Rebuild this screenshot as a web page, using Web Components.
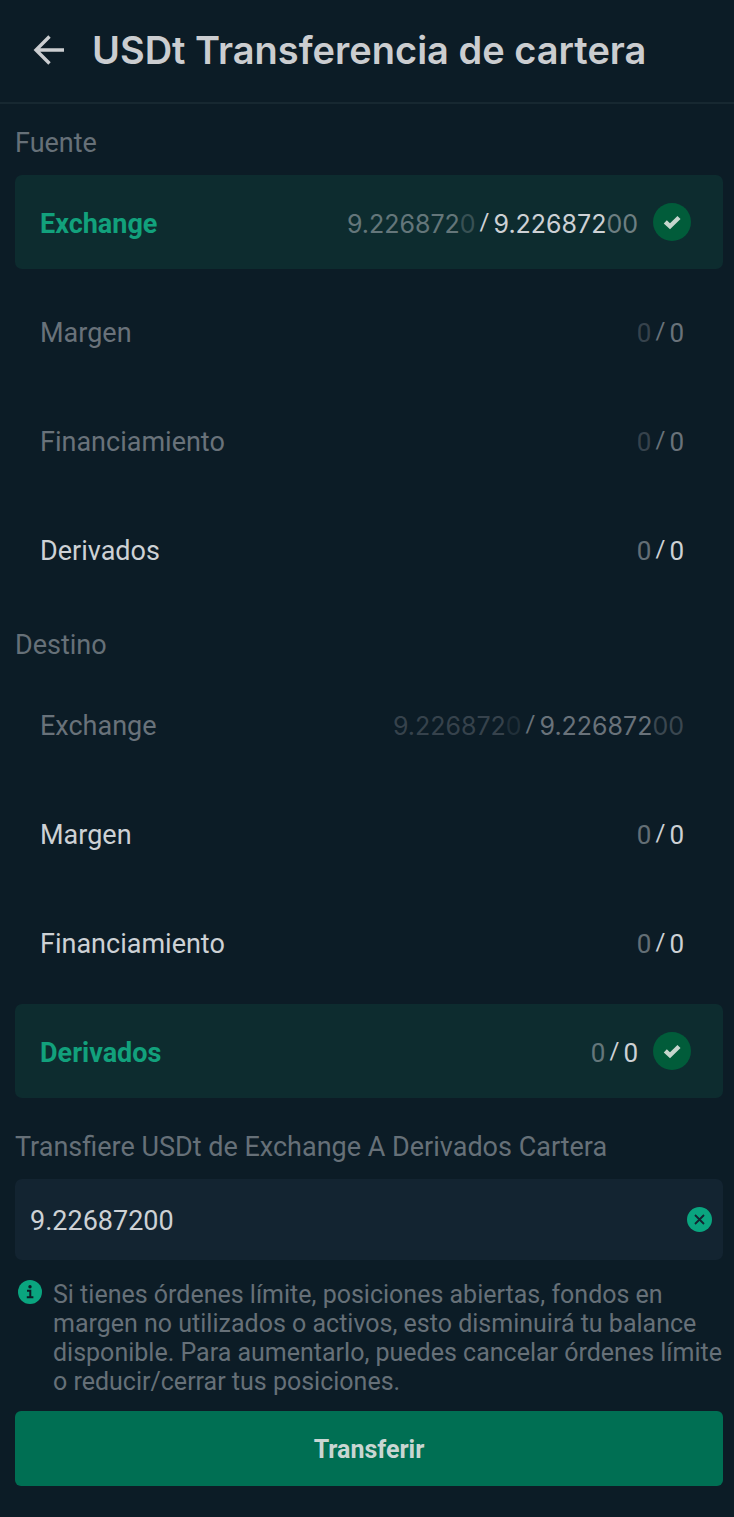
<!DOCTYPE html>
<html lang="es">
<head>
<meta charset="utf-8">
<meta name="viewport" content="width=device-width, initial-scale=1">
<title>USDt Transferencia de cartera</title>
<style>
  html { background: #0c1c26; }
  body { margin: 0; font-family: Roboto, "Liberation Sans", sans-serif; color: #cdd1d5; }
</style>
</head>
<body>
<transfer-app></transfer-app>

<script>
class PageHeader extends HTMLElement {
  connectedCallback() {
    this.attachShadow({ mode: 'open' }).innerHTML = `
      <style>
        :host { display: block; }
        header { display: flex; align-items: center; gap: 28px; height: 100px; padding: 0 32px 2px; border-bottom: 2px solid #172831; }
        button { flex: none; display: flex; padding: 0; border: 0; background: none; color: #cbcdd0; cursor: pointer; }
        h1 { margin: 0; font: 600 38px/48px Inter, sans-serif; color: #cbcdd0; }
      </style>
      <header>
        <button type="button" aria-label="Volver">
          <svg width="32" height="32" viewBox="0 0 32 32" fill="none" stroke="currentColor" stroke-width="3.400"><path d="M32 16H4M17.500 2.500 4 16l13.500 13.500"/></svg>
        </button>
        <h1><slot></slot></h1>
      </header>`;
  }
}
customElements.define('page-header', PageHeader);

/* available / total, with the trailing zeros of each figure dimmed */
class WalletBalance extends HTMLElement {
  static figure(value) {
    const [, head, zeros] = value.match(/^(.*?)(0*)$/);
    return head ? `${head}<i>${zeros}</i>` : value;
  }
  connectedCallback() {
    const available = this.getAttribute('available');
    const total = this.getAttribute('total');
    this.attachShadow({ mode: 'open' }).innerHTML = `
      <style>
        :host { display: flex; align-items: center; gap: 4px; font-size: 26px; line-height: 32px; }
        :host([decimal]) { font-family: Inter, sans-serif; font-size: 25px; }
        .available { opacity: .45; }
        i { font-style: normal; opacity: .5; }
        .slash { font: 24px/28px Roboto, sans-serif; padding-bottom: 4px; }
      </style>
      <span class="available">${WalletBalance.figure(available)}</span>
      <span class="slash">/</span>
      <span>${WalletBalance.figure(total)}</span>`;
  }
}
customElements.define('wallet-balance', WalletBalance);

class WalletPicker extends HTMLElement {
  connectedCallback() {
    const name = this.getAttribute('name');
    const selected = this.getAttribute('selected');
    const disabled = (this.getAttribute('disabled-wallets') || '').split(' ');
    const wallets = [
      ['Exchange', '9.2268720', '9.22687200'],
      ['Margen', '0', '0'],
      ['Financiamiento', '0', '0'],
      ['Derivados', '0', '0'],
    ];
    const rows = wallets.map(([label, available, total]) => `
      <label>
        <input type="radio" name="${name}" value="${label}" ${label === selected ? 'checked' : ''} ${disabled.includes(label) ? 'disabled' : ''}>
        <span class="name">${label}</span>
        <wallet-balance available="${available}" total="${total}" ${total.includes('.') ? 'decimal' : ''}></wallet-balance>
        <svg class="check" width="38" height="38" viewBox="0 0 38 38" aria-hidden="true"><circle cx="19" cy="19" r="19" fill="#015c3a"/><path d="M12.300 18.800l4.700 4.500 9-8.800" fill="none" stroke="#c6d6cd" stroke-width="4.400"/></svg>
      </label>`).join('');
    this.attachShadow({ mode: 'open' }).innerHTML = `
      <style>
        :host { display: block; }
        fieldset { margin: 0; padding: 0; border: 0; min-width: 0; }
        legend { padding: 0 0 16px; font-size: 27px; line-height: 32px; color: #667078; }
        .rows { display: grid; gap: 15px; }
        label { display: flex; align-items: center; height: 94px; box-sizing: border-box; padding: 0 39px 0 25px; border-radius: 7px; cursor: pointer; }
        .name, wallet-balance { padding-top: 3px; }
        .name { flex: 1; font-size: 27px; line-height: 32px; }
        input { appearance: none; margin: 0; width: 0; height: 0; }
        .check { display: none; }
        label:has(:disabled) { color: #69727a; cursor: default; }
        label:has(:checked) { background: #0d2c2f; padding-right: 32px; }
        :checked ~ .name { font-weight: 700; color: #12a17c; }
        :checked ~ .check { display: block; margin-left: 15px; }
      </style>
      <fieldset>
        <legend><slot></slot></legend>
        <div class="rows">${rows}</div>
      </fieldset>`;
  }
}
customElements.define('wallet-picker', WalletPicker);

class AmountField extends HTMLElement {
  connectedCallback() {
    this.attachShadow({ mode: 'open' }).innerHTML = `
      <style>
        :host { display: block; }
        label { display: block; padding-bottom: 16px; font-size: 27px; line-height: 32px; color: #667078; }
        .box { display: flex; align-items: center; height: 81px; padding: 0 11px 0 15px; border-radius: 7px; background: #132431; }
        input { flex: 1; min-width: 0; padding: 2px 0 0; border: 0; outline: 0; background: none; font: 27px/32px Roboto, sans-serif; color: #cdd1d5; }
        button { display: flex; padding: 0; border: 0; background: none; cursor: pointer; }
      </style>
      <label for="amount">${this.getAttribute('label')}</label>
      <div class="box">
        <input id="amount" type="text" inputmode="decimal" value="${this.getAttribute('value')}">
        <button type="button" aria-label="Borrar">
          <svg width="25" height="25" viewBox="0 0 25 25"><circle cx="12.500" cy="12.500" r="12.500" fill="#0aa57f"/><path d="M8 8l9 9M17 8l-9 9" stroke="#132431" stroke-width="1.800"/></svg>
        </button>
      </div>`;
    const root = this.shadowRoot;
    root.querySelector('button').onclick = () => { root.querySelector('input').value = ''; };
  }
}
customElements.define('amount-field', AmountField);

class InfoNote extends HTMLElement {
  connectedCallback() {
    this.attachShadow({ mode: 'open' }).innerHTML = `
      <style>
        :host { display: flex; align-items: flex-start; gap: 11px; padding-left: 3px; }
        svg { flex: none; }
        p { margin: 0; font-size: 25px; line-height: 29px; color: #667078; }
      </style>
      <svg width="24" height="24" viewBox="0 0 24 24" aria-hidden="true"><circle cx="12" cy="12" r="12" fill="#0aa57f"/><circle cx="12" cy="6.800" r="1.700" fill="#0c1c26"/><path d="M9 10.800h3.300v6.200M8.800 17.200h6.600" fill="none" stroke="#0c1c26" stroke-width="2"/></svg>
      <p><slot></slot></p>`;
  }
}
customElements.define('info-note', InfoNote);

class SubmitButton extends HTMLElement {
  connectedCallback() {
    this.attachShadow({ mode: 'open' }).innerHTML = `
      <style>
        :host { display: block; }
        button { display: block; width: 100%; height: 75px; padding: 3px 0 0; border: 0; border-radius: 6px; background: #006f53; color: #c9d6d2; font: 700 25px/30px Roboto, sans-serif; cursor: pointer; }
      </style>
      <button type="button"><slot></slot></button>`;
  }
}
customElements.define('submit-button', SubmitButton);

class TransferApp extends HTMLElement {
  connectedCallback() {
    this.attachShadow({ mode: 'open' }).innerHTML = `
      <style>
        :host { display: block; }
        main { display: flex; flex-direction: column; gap: 33px; padding: 23px 11px 31px 15px; }
        .amount { display: grid; }
        info-note { margin: 20px 0 15px; }
      </style>
      <page-header>USDt Transferencia de cartera</page-header>
      <main>
        <wallet-picker name="source" selected="Exchange" disabled-wallets="Margen Financiamiento">Fuente</wallet-picker>
        <wallet-picker name="target" selected="Derivados" disabled-wallets="Exchange">Destino</wallet-picker>
        <div class="amount">
          <amount-field label="Transfiere USDt de Exchange A Derivados Cartera" value="9.22687200"></amount-field>
          <info-note>Si tienes órdenes límite, posiciones abiertas, fondos en margen no utilizados o activos, esto disminuirá tu balance disponible. Para aumentarlo, puedes cancelar órdenes límite o reducir/cerrar tus posiciones.</info-note>
          <submit-button>Transferir</submit-button>
        </div>
      </main>`;
  }
}
customElements.define('transfer-app', TransferApp);
</script>
</body>
</html>
